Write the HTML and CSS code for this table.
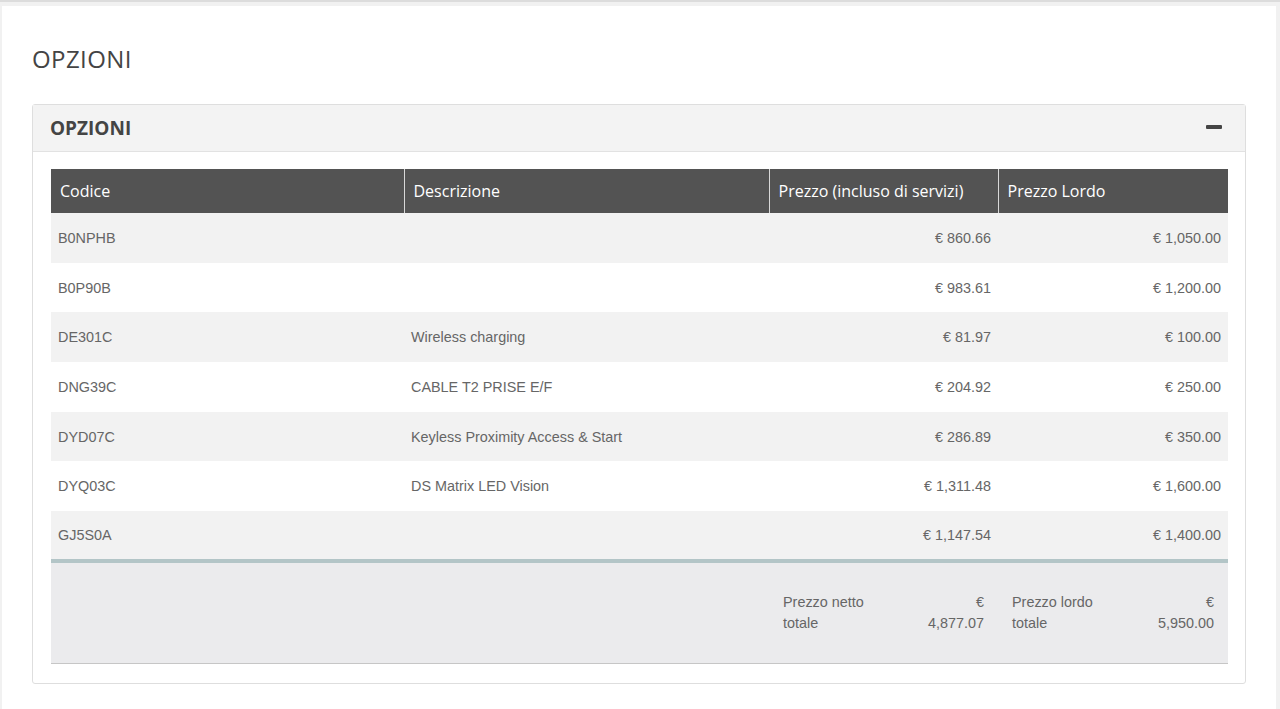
FILE: index.html
```html
<!DOCTYPE html>
<html lang="it">
<head>
<meta charset="utf-8">
<title>Opzioni</title>
<link rel="stylesheet" href="styles.css">
</head>
<body>
<div class="page">
  <h1 class="page-title">OPZIONI</h1>
  <section class="panel">
    <header class="panel-head">
      <h2 class="panel-title">OPZIONI</h2>
      <span class="collapse-icon" aria-label="Comprimi"></span>
    </header>
    <div class="panel-body">
      <table class="opt-table">
        <colgroup>
          <col class="c1"><col class="c2"><col class="c3"><col class="c4">
        </colgroup>
        <thead>
          <tr><th>Codice</th><th>Descrizione</th><th>Prezzo (incluso di servizi)</th><th>Prezzo Lordo</th></tr>
        </thead>
        <tbody>
          <tr><td>B0NPHB</td><td></td><td class="num">€ 860.66</td><td class="num">€ 1,050.00</td></tr>
          <tr><td>B0P90B</td><td></td><td class="num">€ 983.61</td><td class="num">€ 1,200.00</td></tr>
          <tr><td>DE301C</td><td>Wireless charging</td><td class="num">€ 81.97</td><td class="num">€ 100.00</td></tr>
          <tr><td>DNG39C</td><td>CABLE T2 PRISE E/F</td><td class="num">€ 204.92</td><td class="num">€ 250.00</td></tr>
          <tr><td>DYD07C</td><td>Keyless Proximity Access &amp; Start</td><td class="num">€ 286.89</td><td class="num">€ 350.00</td></tr>
          <tr><td>DYQ03C</td><td>DS Matrix LED Vision</td><td class="num">€ 1,311.48</td><td class="num">€ 1,600.00</td></tr>
          <tr><td>GJ5S0A</td><td></td><td class="num">€ 1,147.54</td><td class="num">€ 1,400.00</td></tr>
        </tbody>
        <tfoot>
          <tr>
            <td colspan="2"></td>
            <td><div class="total"><span class="t-label">Prezzo netto totale</span><span class="t-value">€ 4,877.07</span></div></td>
            <td><div class="total"><span class="t-label">Prezzo lordo totale</span><span class="t-value">€ 5,950.00</span></div></td>
          </tr>
        </tfoot>
      </table>
    </div>
  </section>
</div>
</body>
</html>
```
FILE: styles.css
```css
html, body {
  margin: 0;
  padding: 0;
}
body {
  background: #f1f1f1;
  border-top: 2px solid #dcdcdc;
  font-family: "Liberation Sans", Arial, sans-serif;
}
.page {
  background: #fff;
  margin: 4px 4px 0 2px;
  padding: 39px 30px 30px 30px;
  min-height: 640px;
}
.page-title {
  margin: 0;
  font-family: "Open Sans", sans-serif;
  font-weight: 400;
  font-size: 24px;
  line-height: 28px;
  letter-spacing: 0.4px;
  color: #444;
}
.panel {
  margin-top: 31px;
  border: 1px solid #dedede;
  border-radius: 3px;
  background: #fff;
}
.panel-head {
  display: flex;
  align-items: center;
  justify-content: space-between;
  height: 46px;
  padding: 0 23px 0 17px;
  background: #f3f3f3;
  border-bottom: 1px solid #e2e2e2;
}
.panel-title {
  margin: 0;
  font-family: "Open Sans", sans-serif;
  font-weight: 700;
  font-size: 19px;
  color: #444;
}
.collapse-icon {
  display: block;
  width: 16px;
  height: 4px;
  border-radius: 1px;
  background: #444;
  margin-top: -3px;
}
.panel-body {
  padding: 17px 17px 19px 18px;
}
.opt-table {
  width: 1177px;
  border-collapse: collapse;
  table-layout: fixed;
  font-size: 14.4px;
  color: #666;
}
.c1 { width: 353px; }
.c2 { width: 365px; }
.c3 { width: 229px; }
.c4 { width: 230px; }
.opt-table th {
  background: #535353;
  color: #fff;
  font-family: "Open Sans", sans-serif;
  font-weight: 400;
  font-size: 16px;
  text-align: left;
  height: 44px;
  padding: 0 9px;
  border-left: 1px solid #d8d8d8;
}
.opt-table th:first-child { border-left: none; }
.opt-table tbody td {
  height: 49.7px;
  padding: 0 7px;
  box-sizing: border-box;
}
.opt-table tbody tr:nth-child(odd) td { background: #f2f2f2; }
.opt-table tbody tr:nth-child(even) td { background: #fff; }
.opt-table .num { text-align: right; }
.opt-table tfoot td {
  background: #ebebed;
  border-top: 4px solid #b3c5c7;
  border-bottom: 1px solid #c6c6c6;
  height: 100px;
  padding: 0 14px;
}
.total {
  display: flex;
  justify-content: space-between;
  line-height: 21px;
}
.t-label {
  width: 100px;
}
.t-value {
  width: 60px;
  text-align: right;
}
```
